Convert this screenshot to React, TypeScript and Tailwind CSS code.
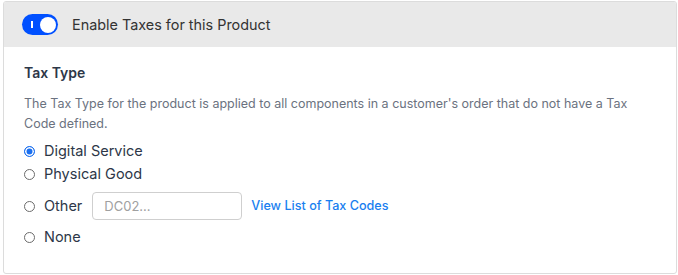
import { useState } from "react";

const options = ["Digital Service", "Physical Good", "Other", "None"];

export default function App() {
  const [enabled, setEnabled] = useState(true);
  const [taxType, setTaxType] = useState("Digital Service");

  return (
    <div className="w-[678px] h-[275px] bg-white pl-[3px] pt-[1px] font-['Inter',sans-serif]">
      <div className="w-[674px] h-[273px] border border-[#dcdcdc] rounded-[3px] overflow-hidden">
        {/* header */}
        <div className="h-[45px] bg-[#e9e9e9] flex items-center pl-[18px] gap-[14px]">
          <button
            type="button"
            onClick={() => setEnabled(!enabled)}
            className="relative w-[36px] h-[21px] rounded-full bg-[#0050ff] flex items-center"
          >
            <span className="absolute left-[9px] top-[7px] w-[1.5px] h-[7px] bg-white" />
            <span className="absolute right-[2px] top-[2.5px] w-[16px] h-[16px] rounded-full bg-white" />
          </button>
          <span className="text-[14.4px] text-[#333333]">Enable Taxes for this Product</span>
        </div>

        {/* body */}
        <div className="px-[20px] pt-[16px]">
          <h3 className="text-[14px] leading-[20px] font-semibold text-[#2d3748]">Tax Type</h3>
          <p className="mt-[11px] text-[12.5px] leading-[20px] text-[#6b7280]">
            The Tax Type for the product is applied to all components in a customer's order that do not have a Tax
            Code defined.
          </p>

          <div className="mt-[6px] flex flex-col">
            {options.map((opt) => {
              const checked = taxType === opt;
              return (
                <div
                  key={opt}
                  className={
                    opt === "Other"
                      ? "flex items-center h-[28px] mt-[7px]"
                      : opt === "None"
                      ? "flex items-center h-[22px] mt-[6px]"
                      : "flex items-center h-[22px] mt-[1px] first:mt-0"
                  }
                >
                  <button
                    type="button"
                    onClick={() => setTaxType(opt)}
                    className={
                      checked
                        ? "w-[11px] h-[11px] rounded-full bg-[#1a6ff0] border-[1.5px] border-[#1a6ff0] shadow-[inset_0_0_0_1.5px_white]"
                        : "w-[11px] h-[11px] rounded-full border border-[#6b6b6b] bg-white"
                    }
                  />
                  <span className="ml-[9px] text-[14.5px] text-[#2d3748]">{opt}</span>
                  {opt === "Other" && (
                    <>
                      <input
                        placeholder="DC02..."
                        className="ml-[10px] w-[150px] h-[28px] rounded-[4px] border border-[#cfcfcf] px-[11px] text-[13px] outline-none placeholder-[#a0a0a0]"
                      />
                      <a href="#" className="ml-[9px] text-[12.6px] font-medium text-[#1a7ff0]">
                        View List of Tax Codes
                      </a>
                    </>
                  )}
                </div>
              );
            })}
          </div>
        </div>
      </div>
    </div>
  );
}
